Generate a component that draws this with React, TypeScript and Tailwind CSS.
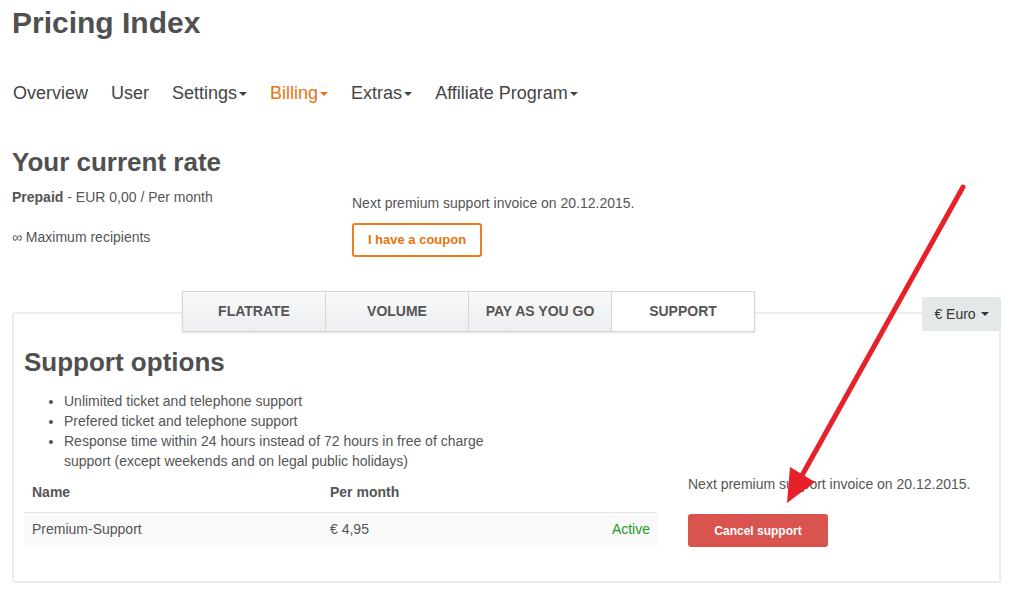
import React from 'react';

const Caret = () => (
  <span className="ml-[2px] inline-block h-0 w-0 border-x-[4px] border-t-[4px] border-x-transparent border-t-current align-middle" />
);

const navItems = [
  { label: 'Overview', caret: false },
  { label: 'User', caret: false },
  { label: 'Settings', caret: true },
  { label: 'Billing', caret: true, active: true },
  { label: 'Extras', caret: true },
  { label: 'Affiliate Program', caret: true },
];

const tabs = ['FLATRATE', 'VOLUME', 'PAY AS YOU GO', 'SUPPORT'];

const features = [
  'Unlimited ticket and telephone support',
  'Prefered ticket and telephone support',
  'Response time within 24 hours instead of 72 hours in free of charge support (except weekends and on legal public holidays)',
];

export default function App() {
  return (
    <div className="relative min-h-[592px] bg-white pl-3 font-['Liberation_Sans',Arial,sans-serif] text-[#555]">
      {/* Header */}
      <h1 className="pt-[5px] text-[30px] leading-[36px] font-bold text-[#505050]">Pricing Index</h1>

      <nav className="mt-[40px] ml-px flex gap-[23px] text-[18px] leading-[24px]">
        {navItems.map((item) => (
          <a
            key={item.label}
            className={item.active ? 'text-[#e8730f]' : 'text-[#444]'}
          >
            {item.label}
            {item.caret && <Caret />}
          </a>
        ))}
      </nav>

      {/* Current rate */}
      <h2 className="mt-[42px] text-[26px] leading-[30px] font-bold text-[#505050]">Your current rate</h2>
      <div className="flex">
        <div className="w-[340px] text-[14px] leading-[20px]">
          <p className="mt-[10px]">
            <span className="font-bold">Prepaid</span> - EUR 0,00 / Per month
          </p>
          <p className="mt-[20px]">∞ Maximum recipients</p>
        </div>
        <div className="text-[14px] leading-[20px]">
          <p className="mt-[16px]">Next premium support invoice on 20.12.2015.</p>
          <button className="mt-[10px] h-[34px] w-[130px] rounded-[3px] border-2 border-[#ee7d22] text-[13px] font-bold text-[#e8730f]">
            I have a coupon
          </button>
        </div>
      </div>

      {/* Plans */}
      <div className="mt-[34px] w-[989px]">
        <div className="relative z-10 flex items-start">
          <div className="ml-[170px] flex shadow-[0_1px_2px_rgba(0,0,0,0.12)]">
            {tabs.map((t, i) => (
              <div
                key={t}
                className={
                  'flex h-[41px] w-[144px] items-center justify-center border border-[#d6d6d6] text-[14px] font-bold text-[#555] ' +
                  (i > 0 ? '-ml-px ' : '') +
                  (t === 'SUPPORT' ? 'bg-white' : 'bg-gradient-to-b from-[#f9f9fa] to-[#eceef1]')
                }
              >
                {t}
              </div>
            ))}
          </div>
          <button className="mt-[6px] ml-auto flex h-[34px] w-[79px] items-center justify-center gap-[3px] rounded-t-[3px] bg-[#e3e8e8] text-[14px] text-[#333]">
            € Euro <Caret />
          </button>
        </div>

        <div className="-mt-[20px] rounded-[3px] border-2 border-[#ececec] px-[10px] pt-[33px] pb-[34px]">
          <h3 className="text-[26px] leading-[30px] font-bold text-[#505050]">Support options</h3>
          <ul className="mt-[14px] w-[480px] list-disc pl-[40px] text-[14px] leading-[20px]">
            {features.map((f) => (
              <li key={f}>{f}</li>
            ))}
          </ul>

          <div className="mt-[3px] flex items-end">
            <table className="w-[634px] text-[14px]">
              <thead>
                <tr className="h-[38px] text-left">
                  <th className="w-[306px] pl-[8px] font-bold text-[#555]">Name</th>
                  <th className="font-bold text-[#555]">Per month</th>
                  <th />
                </tr>
              </thead>
              <tbody>
                <tr className="h-[35px] border-t border-[#e6e6e6] bg-[#f9f9f9]">
                  <td className="pl-[8px]">Premium-Support</td>
                  <td>€ 4,95</td>
                  <td className="pr-[8px] text-right text-[#1f9a1f]">Active</td>
                </tr>
              </tbody>
            </table>
            <div className="ml-[30px] text-[14px] leading-[20px]">
              <p>Next premium support invoice on 20.12.2015.</p>
              <button className="mt-[20px] h-[33px] w-[140px] rounded-[3px] bg-[#d9534f] text-[12px] font-bold text-white">
                Cancel support
              </button>
            </div>
          </div>
        </div>
      </div>

      {/* Annotation arrow */}
      <svg className="pointer-events-none absolute inset-0 z-20" width="1019" height="592">
        <line x1="963" y1="187" x2="800" y2="479" stroke="#e8202a" strokeWidth="5" strokeLinecap="round" />
        <polygon points="787,503 815,482 790,467" fill="#e8202a" />
      </svg>
    </div>
  );
}
